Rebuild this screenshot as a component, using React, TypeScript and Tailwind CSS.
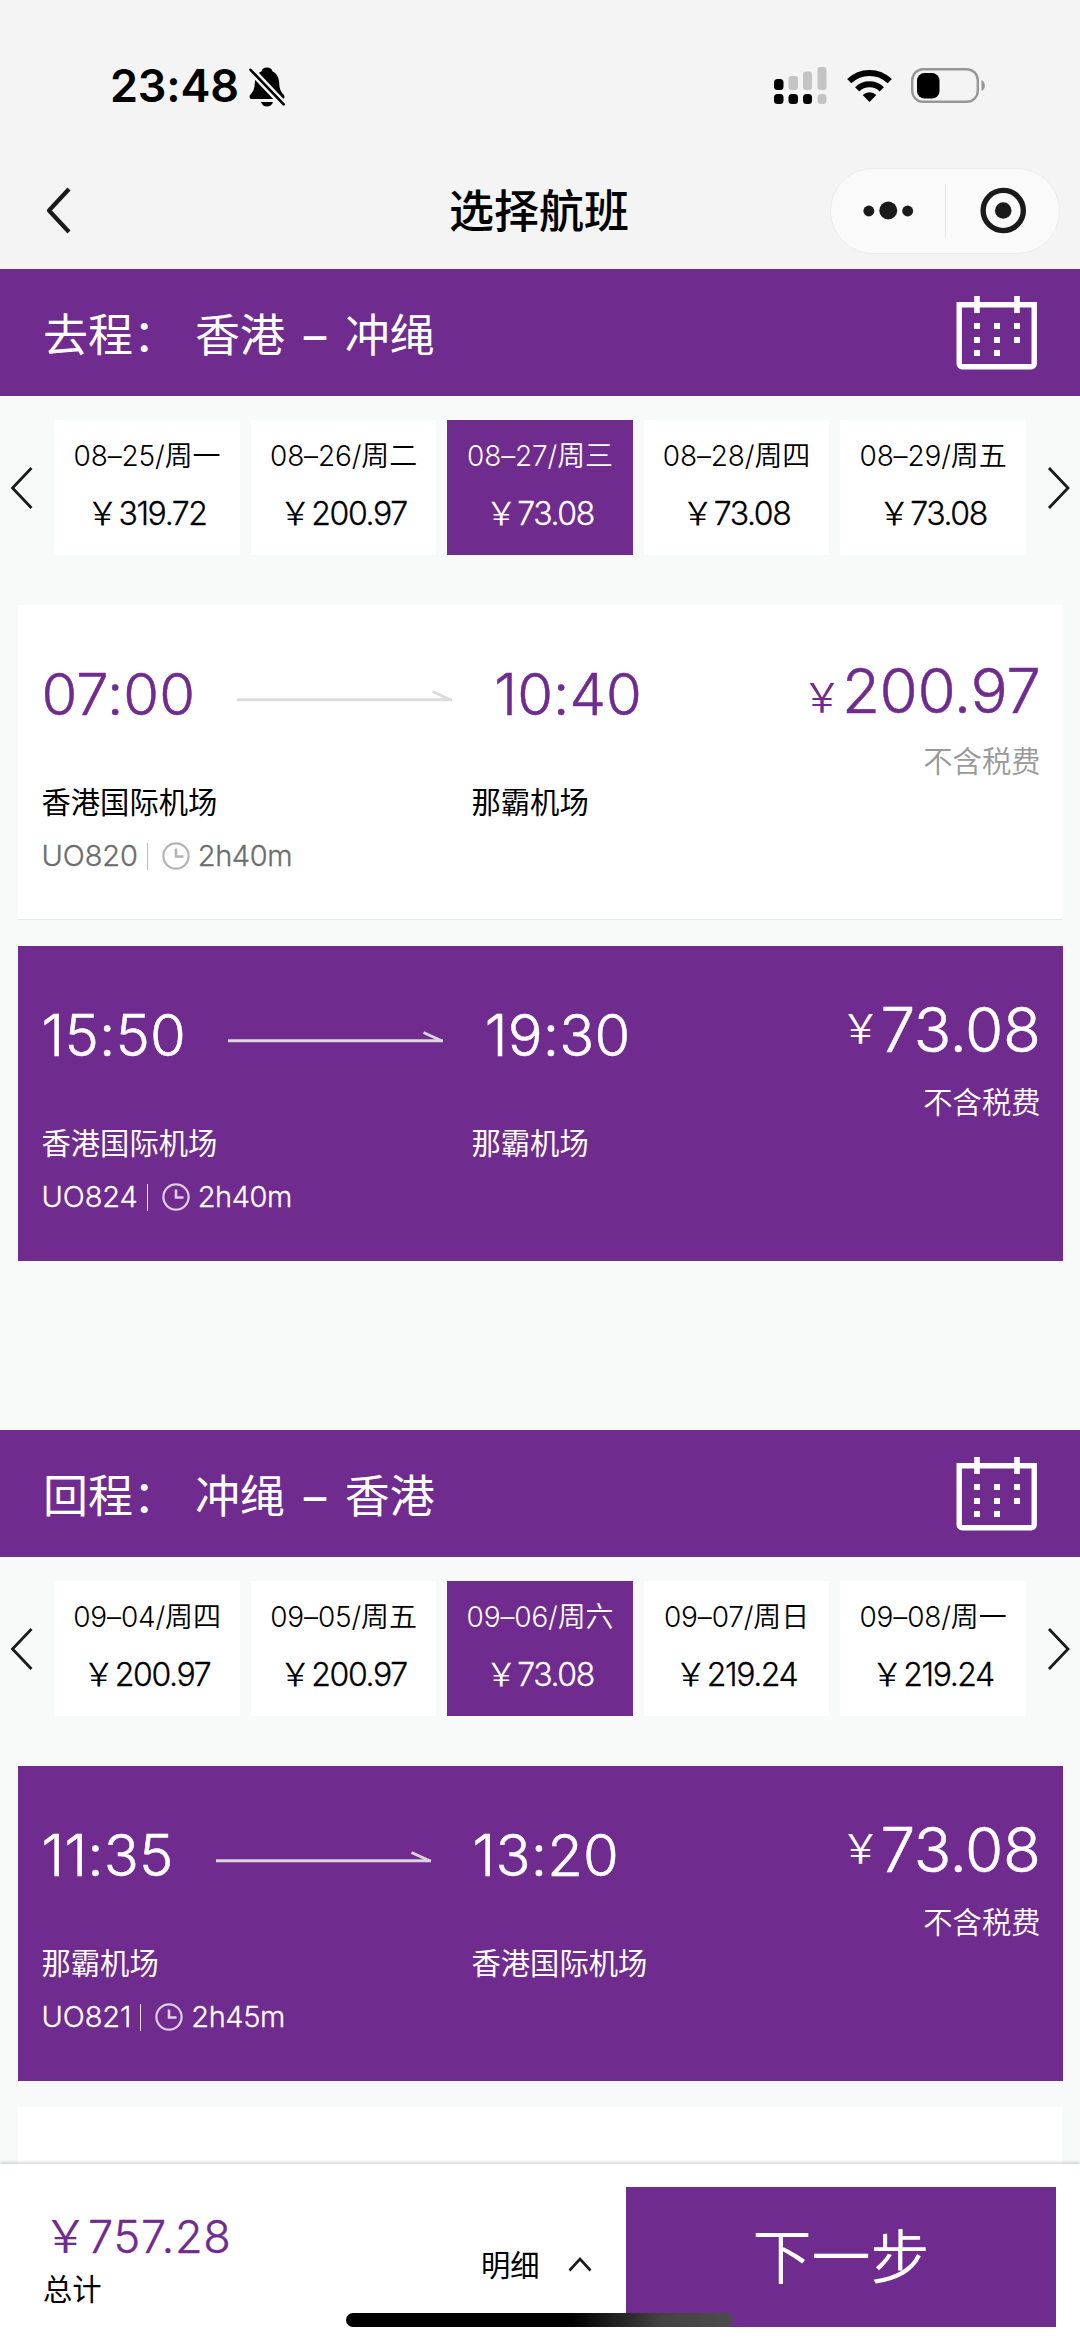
import { useState } from 'react';

type Fare = { date: string; price: string };

type Flight = {
  code: string;
  depart: string;
  arrive: string;
  from: string;
  to: string;
  duration: string;
  price: string;
};

type Leg = {
  label: string;
  route: string;
  fares: Fare[];
  flights: Flight[];
};

// full-width yuan sign and colon
const YUAN = '\uffe5';
const COLON = '\uff1a';

const outbound: Leg = {
  label: '去程',
  route: '香港 – 冲绳',
  fares: [
    { date: '08–25/周一', price: '319.72' },
    { date: '08–26/周二', price: '200.97' },
    { date: '08–27/周三', price: '73.08' },
    { date: '08–28/周四', price: '73.08' },
    { date: '08–29/周五', price: '73.08' },
  ],
  flights: [
    { code: 'UO820', depart: '07:00', arrive: '10:40', from: '香港国际机场', to: '那霸机场', duration: '2h40m', price: '200.97' },
    { code: 'UO824', depart: '15:50', arrive: '19:30', from: '香港国际机场', to: '那霸机场', duration: '2h40m', price: '73.08' },
  ],
};

const inbound: Leg = {
  label: '回程',
  route: '冲绳 – 香港',
  fares: [
    { date: '09–04/周四', price: '200.97' },
    { date: '09–05/周五', price: '200.97' },
    { date: '09–06/周六', price: '73.08' },
    { date: '09–07/周日', price: '219.24' },
    { date: '09–08/周一', price: '219.24' },
  ],
  flights: [
    { code: 'UO821', depart: '11:35', arrive: '13:20', from: '那霸机场', to: '香港国际机场', duration: '2h45m', price: '73.08' },
  ],
};

function StatusBar() {
  return (
    <div className="flex h-[140px] items-start justify-between pl-[110px] pr-[94px] pt-[62px]">
      <div className="flex items-start">
        <span className="w-[139px] whitespace-nowrap text-[45px] font-semibold leading-[48px] tracking-[-0.2px]">23:48</span>
        <svg className="mt-[5px] h-[40px] w-[36px]" viewBox="0 0 36 40" fill="none">
          <path
            d="M18 0.500c3 0 5 1.600 5.600 4 4.600 2 6.400 6.500 6.600 11.500.2 6 1.800 8.500 4.300 11.500 1.800 2.300 1 4.500-1.500 4.500H3C.5 32-.3 29.800 1.500 27.500 4 24.500 5.600 22 5.800 16 6 11 7.800 6.500 12.400 4.500 13 2.100 15 .5 18 .5Z"
            fill="#000"
          />
          <path d="M12 35h12c-1 3-3.200 4.600-6 4.600S13 38 12 35Z" fill="#000" />
          <path d="M-1 0L37 40" stroke="#f4f4f4" strokeWidth="7.500" />
          <path d="M1.500 2.800L34.700 37.300" stroke="#000" strokeWidth="2.600" strokeLinecap="round" />
        </svg>
      </div>
      <div className="flex items-start pt-[5px]">
        <svg className="h-[38px] w-[53px]" viewBox="0 0 53 38">
          <rect x="0" y="12" width="9.500" height="11" rx="3.500" />
          <rect x="14.500" y="9" width="9.500" height="14" rx="3" fill="#c4c4c4" />
          <rect x="29" y="4.500" width="9" height="18.500" rx="3" fill="#c4c4c4" />
          <rect x="43.500" y="0" width="9" height="23" rx="3" fill="#c4c4c4" />
          <rect x="0" y="27" width="9.500" height="10" rx="3.500" />
          <rect x="14.500" y="27" width="9.500" height="10" rx="3.500" />
          <rect x="29" y="27" width="9" height="10" rx="3.500" />
          <rect x="43.500" y="27" width="9" height="10" rx="3.500" fill="#c4c4c4" />
        </svg>
        <svg className="ml-[20px] mt-[2px] h-[33px] w-[45px]" viewBox="0 0 45 33" fill="none">
          <path d="M2.200 12.200a29 29 0 0 1 40.600 0" stroke="#000" strokeWidth="6" />
          <path d="M10.200 20.300a17.500 17.500 0 0 1 24.600 0" stroke="#000" strokeWidth="6" />
          <path d="M22.500 33l-6.800-7a10 10 0 0 1 13.600 0Z" fill="#000" />
        </svg>
        <svg className="ml-[19px] mt-[1px] h-[35px] w-[75px]" viewBox="0 0 75 35" fill="none">
          <rect x="1.200" y="1.200" width="65.600" height="32.600" rx="11" stroke="#979797" strokeWidth="2.400" />
          <rect x="6" y="5" width="22.500" height="25.500" rx="7.500" fill="#000" />
          <path d="M70.500 12c4.500 2 4.500 9 0 11Z" fill="#979797" />
        </svg>
      </div>
    </div>
  );
}

function NavBar() {
  return (
    <div className="flex h-[129px] items-start justify-between pl-[46px] pr-[20px] pt-[28px]">
      <div className="flex w-[230px] pt-[19px]">
        <svg className="h-[47px] w-[25px]" viewBox="0 0 25 47" fill="none">
          <path d="M23 2L3 23.500L23 45" stroke="#1a1a1a" strokeWidth="4.200" strokeLinejoin="round" />
        </svg>
      </div>
      <h1 className="mr-[28px] mt-[21px] whitespace-nowrap text-[45px] font-medium leading-[45px]">选择航班</h1>
      <div className="flex h-[86px] w-[230px] shrink-0 items-center rounded-full border border-[#ececec] bg-[#fafafa]">
        <svg className="h-[20px] w-[115px]" viewBox="0 0 115 20" fill="#1a1a1a">
          <circle cx="38" cy="10" r="5.500" />
          <circle cx="57.500" cy="9.500" r="9" />
          <circle cx="77" cy="10" r="5.500" />
        </svg>
        <span className="h-[54px] w-px bg-[#e6e6e6]" />
        <svg className="h-[48px] w-[113px]" viewBox="0 0 113 48" fill="none">
          <circle cx="57.500" cy="23.500" r="20.200" stroke="#1a1a1a" strokeWidth="5.400" />
          <circle cx="57.500" cy="23.500" r="8.300" fill="#1a1a1a" />
        </svg>
      </div>
    </div>
  );
}

function CalendarIcon() {
  return (
    <svg className="h-[74px] w-[82px]" viewBox="0 0 82 74" fill="none">
      <path d="M3.200 8.800h75v59a3 3 0 0 1-3 3h-69a3 3 0 0 1-3-3Z" stroke="#fff" strokeWidth="5.400" />
      <path d="M21 0v17M61 0v17" stroke="#fff" strokeWidth="5.600" />
      <path
        d="M18 27h6v6h-6zM38 27h6v6h-6zM58 27h6v6h-6zM18 41h6v6h-6zM38 41h6v6h-6zM58 41h6v6h-6zM18 54h6v6h-6zM38 54h6v6h-6z"
        fill="#fff"
      />
    </svg>
  );
}

function RouteArrow({ active }: { active: boolean }) {
  const color = active ? '#dcd6df' : '#dcdcdc';
  return (
    <svg className="mt-[4px] h-[12px] w-[216px] shrink-0" viewBox="0 0 216 12" fill="none">
      <path d="M0 9.700H215" stroke={color} strokeWidth="3" />
      <path d="M195.500 1.500L213 9.500" stroke={color} strokeWidth="2.800" />
    </svg>
  );
}

function ClockIcon({ active }: { active: boolean }) {
  return (
    <svg className="h-[28px] w-[28px]" viewBox="0 0 28 28" fill="none" stroke={active ? '#dcd0e2' : '#b4b4b4'} strokeWidth="2.200">
      <circle cx="14" cy="14" r="12.600" />
      <path d="M14 6.500V14.500H21.500" strokeWidth="2.600" />
    </svg>
  );
}

function FareStrip({ fares, selected, onSelect }: { fares: Fare[]; selected: number; onSelect: (i: number) => void }) {
  return (
    <div className="flex h-[135px] items-center justify-between px-[10px]">
      <svg className="h-[42px] w-[44px]" viewBox="0 0 44 42" fill="none">
        <path d="M21.500 1L2.500 21L21.500 41" stroke="#1a1a1a" strokeWidth="2.800" />
      </svg>
      <div className="flex gap-[11px]">
        {fares.map((fare, i) => (
          <button
            key={fare.date}
            onClick={() => onSelect(i)}
            className={`flex h-[135px] w-[185.5px] flex-col items-center pt-[22px] ${
              i === selected ? 'bg-[#702b8f] text-white' : 'bg-white text-black'
            }`}
          >
            <span className="whitespace-nowrap text-[28px] font-[350] leading-[28px] tracking-[-0.15px]">{fare.date}</span>
            <span className="mt-[28px] flex whitespace-nowrap pr-px text-[32px] font-[350] leading-[32px]">
              <span>{YUAN}</span>
              <span className="tracking-[-1.4px] [-webkit-text-stroke:0.3px]">{fare.price}</span>
            </span>
          </button>
        ))}
      </div>
      <svg className="h-[42px] w-[44px]" viewBox="0 0 44 42" fill="none">
        <path d="M23 1L42 21L23 41" stroke="#1a1a1a" strokeWidth="2.800" />
      </svg>
    </div>
  );
}

function FlightCard({ flight, active, onClick }: { flight: Flight; active: boolean; onClick: () => void }) {
  return (
    <div
      onClick={onClick}
      className={`flex h-[315px] w-[1045px] justify-between pl-[24px] pr-[22px] ${
        active ? 'bg-[#702b8f] text-white' : 'border-b border-[#e8e8e8] bg-white text-black'
      }`}
    >
      <div className="pt-[60px]">
        <div
          className={`flex items-center text-[58px] font-[350] leading-[58px] tracking-[0.1px] [-webkit-text-stroke:0.5px] ${
            active ? '' : 'text-[#702b8f]'
          }`}
        >
          <span>{flight.depart}</span>
          <span className="ml-[42px] mr-[41px] flex">
            <RouteArrow active={active} />
          </span>
          <span>{flight.arrive}</span>
        </div>
        <div className="mt-[65px] flex text-[29.3px] leading-[30px]">
          <span className="w-[430px]">{flight.from}</span>
          <span>{flight.to}</span>
        </div>
        <div
          className={`mt-[23px] flex items-center text-[29px] font-[350] leading-[30px] [-webkit-text-stroke:0.3px] ${
            active ? '' : 'text-[#6c6c6c]'
          }`}
        >
          <span className="mr-[9px] tracking-[-0.1px]">{flight.code}</span>
          <span className={`mr-[14px] h-[27px] w-px ${active ? 'bg-[#e6dcea]' : 'bg-[#bbb]'}`} />
          <ClockIcon active={active} />
          <span className="ml-[8px] tracking-[-0.4px]">{flight.duration}</span>
        </div>
      </div>
      <div className={`flex flex-col items-end ${active ? 'pt-[53px]' : 'pt-[55px]'}`}>
        <div className={`flex h-[62px] items-start font-[350] ${active ? '' : 'text-[#702b8f]'}`}>
          <span className={`text-[40px] leading-[40px] ${active ? 'mt-[10px]' : 'mt-[18px]'}`}>{YUAN}</span>
          <span className="text-[62px] leading-[62px] tracking-[-0.4px] [-webkit-text-stroke:0.5px]">{flight.price}</span>
        </div>
        <span
          className={`text-[29.3px] font-[350] leading-[30px] ${active ? 'mt-[27px]' : 'mt-[25px] text-[#999]'}`}
        >
          不含税费
        </span>
      </div>
    </div>
  );
}

function LegSection({ leg, initial }: { leg: Leg; initial: number }) {
  const [fare, setFare] = useState(2);
  const [flight, setFlight] = useState(initial);

  return (
    <section>
      <div className="flex h-[127px] items-center justify-between bg-[#702b8f] pl-[43px] pr-[42px] text-white">
        <div className="flex pt-[6px] text-[45px] leading-[48px]">
          <span className="w-[152px]">
            {leg.label}
            {COLON}
          </span>
          <span className="[word-spacing:6px]">{leg.route}</span>
        </div>
        <CalendarIcon />
      </div>
      <div className="pt-[24px]">
        <FareStrip fares={leg.fares} selected={fare} onSelect={setFare} />
      </div>
      <div className="flex flex-col items-center gap-[26px] pt-[50px]">
        {leg.flights.map((item, i) => (
          <FlightCard key={item.code} flight={item} active={i === flight} onClick={() => setFlight(i)} />
        ))}
      </div>
    </section>
  );
}

export default function App() {
  return (
    <div className="relative flex h-[2348px] w-[1080px] flex-col overflow-hidden bg-[#f8faf9] font-['Inter','Noto_Sans_CJK_SC',sans-serif] text-black">
      <header className="shrink-0 bg-[#f4f4f4]">
        <StatusBar />
        <NavBar />
      </header>

      <main className="flex min-h-0 flex-1 flex-col overflow-hidden">
        <LegSection leg={outbound} initial={1} />
        <div className="h-[169px] shrink-0" />
        <LegSection leg={inbound} initial={0} />
        <div className="mx-[18px] mt-[26px] h-[315px] shrink-0 bg-white" />
      </main>

      <footer className="relative flex h-[184px] shrink-0 bg-white pl-[43px] pr-[24px] shadow-[0_-2px_3px_rgba(0,0,0,0.14)]">
        <div className="w-[438px] pt-[50px]">
          <div className="flex text-[45px] font-[350] leading-[45px] text-[#702b8f]">
            <span>{YUAN}</span>
            <span className="tracking-[0.8px] [-webkit-text-stroke:0.4px]">757.28</span>
          </div>
          <div className="mt-[16px] text-[29.3px] leading-[30px]">总计</div>
        </div>
        <div className="flex w-[145px] pt-[87px]">
          <span className="text-[29.3px] leading-[30px]">明细</span>
          <svg className="ml-[28px] mt-[6px] h-[15px] w-[24px]" viewBox="0 0 24 15" fill="none">
            <path d="M1.500 13.500L12 2L22.500 13.500" stroke="#1a1a1a" strokeWidth="2.600" />
          </svg>
        </div>
        <button className="mt-[23px] h-[140px] w-[430px] bg-[#702b8f] pt-[2px] text-[59px] font-[350] leading-[60px] text-white">
          下一步
        </button>
      </footer>

      <div className="absolute bottom-[21px] left-[346px] h-[14px] w-[387px] rounded-full bg-[linear-gradient(90deg,#000_0%,#000_58%,#444_82%,#4b4b4b_100%)]" />
    </div>
  );
}
